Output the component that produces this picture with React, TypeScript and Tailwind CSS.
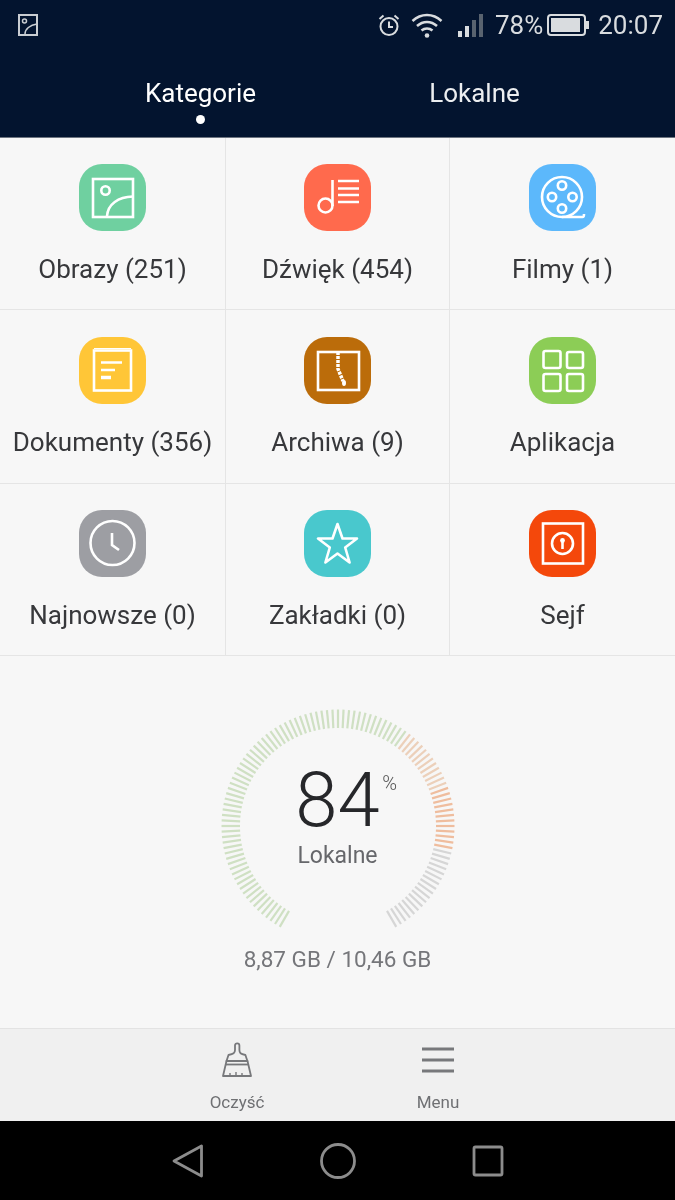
import React from "react";

const S = ({ children }: { children: React.ReactNode }) => (
  <svg viewBox="0 0 67 67" width={67} height={67} fill="none" stroke="#fff" strokeWidth={2.6}>
    {children}
  </svg>
);

const icons: Record<string, React.ReactNode> = {
  image: (
    <S>
      <rect x="14" y="15" width="40" height="38" />
      <circle cx="26.5" cy="26.5" r="4.2" />
      <path d="M28 52c1-12 11-19 26-19.500" />
    </S>
  ),
  music: (
    <S>
      <circle cx="21.500" cy="41.500" r="7" />
      <path d="M28.500 42V16" />
      <path d="M34 17h21M34 24.500h21M34 31h21M34 38h21" />
    </S>
  ),
  film: (
    <S>
      <circle cx="33" cy="33" r="20" />
      <circle cx="33" cy="21.500" r="4.200" />
      <circle cx="23" cy="33" r="4.200" />
      <circle cx="43.500" cy="33" r="4.200" />
      <circle cx="33" cy="44.500" r="4.200" />
      <path d="M33 53h20.500c1.500 0 1.500-1 1.500-3" />
    </S>
  ),
  doc: (
    <S>
      <rect x="15" y="13.500" width="37" height="40" />
      <path d="M15 11.500h37" strokeWidth={1} />
      <path d="M22 25.500h21M22 33h14" />
      <path d="M22 40.500h10" strokeWidth={3.500} />
    </S>
  ),
  zip: (
    <S>
      <rect x="14" y="15" width="41" height="38" />
      <path d="M34 15v17l5 12" strokeWidth={3.500} strokeDasharray="3 1" />
      <ellipse cx="40" cy="46" rx="2" ry="3" fill="#fff" stroke="none" />
    </S>
  ),
  apps: (
    <S>
      <rect x="14.500" y="14" width="17" height="17" rx="2" />
      <rect x="38" y="15" width="16" height="16" rx="2" />
      <rect x="14.500" y="37" width="17" height="17" rx="2" />
      <rect x="38" y="37" width="16" height="17" rx="2" />
    </S>
  ),
  clock: (
    <S>
      <circle cx="33.500" cy="33" r="22" />
      <path d="M33 23v12l7 5" />
    </S>
  ),
  star: (
    <S>
      <path d="M33.500 14l5 14.500h14.500l-11.800 9 4.400 15-12.100-9-12.100 9 4.400-15-11.800-9h14.500z" strokeLinejoin="round" />
    </S>
  ),
  safe: (
    <S>
      <rect x="14" y="13.500" width="40" height="40" />
      <circle cx="33.500" cy="33.500" r="10.500" />
      <circle cx="33.500" cy="30.500" r="2.400" fill="#fff" stroke="none" />
      <path d="M33.500 31v8" />
    </S>
  ),
};

const rows = [
  {
    h: "h-[172px]",
    pt: "pt-[26px]",
    cells: [
      { label: "Obrazy (251)", icon: "image", bg: "bg-[#6fd0a0]" },
      { label: "Dźwięk (454)", icon: "music", bg: "bg-[#ff6a4d]" },
      { label: "Filmy (1)", icon: "film", bg: "bg-[#5cb8fb]" },
    ],
  },
  {
    h: "h-[174px]",
    pt: "pt-[27px]",
    cells: [
      { label: "Dokumenty (356)", icon: "doc", bg: "bg-[#ffc637]" },
      { label: "Archiwa (9)", icon: "zip", bg: "bg-[#bb6c0a]" },
      { label: "Aplikacja", icon: "apps", bg: "bg-[#8ccd56]" },
    ],
  },
  {
    h: "h-[172px]",
    pt: "pt-[26px]",
    cells: [
      { label: "Najnowsze (0)", icon: "clock", bg: "bg-[#9d9ea3]" },
      { label: "Zakładki (0)", icon: "star", bg: "bg-[#49c8cd]" },
      { label: "Sejf", icon: "safe", bg: "bg-[#f4480b]" },
    ],
  },
];

function Gauge() {
  const ticks = [];
  const n = 110;
  for (let i = 0; i <= n; i++) {
    const deg = -150 + (300 * i) / n;
    const a = (deg * Math.PI) / 180;
    const s = Math.sin(a);
    const c = Math.cos(a);
    let color = "#cfe0c3";
    if (deg > 102) color = "#d6d6d6";
    else if (deg > 70) color = "#efbd9e";
    else if (deg > 37) color = "#ecd0ba";
    ticks.push(
      <line key={i} x1={120 + 98 * s} y1={120 - 98 * c} x2={120 + 116.500 * s} y2={120 - 116.500 * c} stroke={color} strokeWidth={2.2} />
    );
  }
  return (
    <svg width={240} height={240} viewBox="0 0 240 240">
      {ticks}
    </svg>
  );
}

export default function App() {
  return (
    <div className="w-[675px] h-[1200px] flex flex-col overflow-hidden bg-[#f7f7f7] blur-[0.7px] font-['Roboto',sans-serif]">
      <header className="h-[138px] shrink-0 bg-[#03142f] border-b border-[#6d7480] text-[#d9dcdf]">
        <div className="h-[50px] flex items-center pl-[18px] pr-3">
          <svg width={20} height={22} viewBox="0 0 20 22" fill="none" stroke="#c9cdd2" strokeWidth={2}>
            <rect x="1" y="1" width="18" height="20" />
            <circle cx="6.500" cy="7" r="2" strokeWidth={1.500} />
            <path d="M7 20c0-5 5-9 12-10" strokeWidth={1.500} />
          </svg>
          <svg className="ml-auto" width={24} height={24} viewBox="0 0 24 24" fill="none" stroke="#d9dcdf" strokeWidth={2}>
            <circle cx="12" cy="13.500" r="8.500" />
            <path d="M12 8.500v5.500h4M2.500 6l4-3.500M21.500 6l-4-3.500" />
          </svg>
          <svg className="ml-[10px]" width={32} height={26} viewBox="0 0 32 26" fill="none" stroke="#d9dcdf" strokeWidth={2.500}>
            <path d="M1.500 9c8.500-8 20.500-8 29 0M6 14c6-5.500 14-5.500 20 0M10.500 18.500c3.200-2.800 7.800-2.800 11 0" />
            <circle cx="16" cy="23.500" r="2.300" fill="#d9dcdf" stroke="none" />
          </svg>
          <svg className="ml-[14px]" width={28} height={24} viewBox="0 0 28 24">
            <rect x="1" y="18" width="4" height="6" fill="#d9dcdf" />
            <rect x="8" y="13" width="4" height="11" fill="#d9dcdf" />
            <rect x="15" y="7" width="4" height="17" fill="#59636f" />
            <rect x="22" y="1" width="4" height="23" fill="#59636f" />
          </svg>
          <span className="ml-[10px] text-[26px] leading-none">78%</span>
          <svg className="ml-[4px]" width={43} height={22} viewBox="0 0 43 22">
            <rect x="1" y="1" width="37" height="20" rx="3" fill="none" stroke="#d9dcdf" strokeWidth={2} />
            <rect x="4" y="4" width="29" height="14" fill="#d9dcdf" />
            <rect x="39" y="7" width="3" height="8" fill="#d9dcdf" />
          </svg>
          <span className="ml-[8px] text-[26px] leading-none">20:07</span>
        </div>
        <div className="flex justify-center pt-[27px]">
          <div className="w-[274px] flex flex-col items-center">
            <span className="text-[26px] leading-[32px] text-white">Kategorie</span>
            <span className="mt-[6px] w-[9px] h-[9px] rounded-full bg-white" />
          </div>
          <div className="w-[274px] flex flex-col items-center">
            <span className="text-[26px] leading-[32px] text-[#eceef0]">Lokalne</span>
          </div>
        </div>
      </header>

      <div className="flex flex-col">
        {rows.map((row, i) => (
          <div key={i} className={`grid grid-cols-[226px_224px_225px] border-b border-[#e5e5e5] ${row.h}`}>
            {row.cells.map((cell, j) => (
              <div key={j} className={`flex flex-col items-center ${row.pt} ${j < 2 ? "border-r border-[#e5e5e5]" : ""}`}>
                <div className={`w-[67px] h-[67px] rounded-[23px] ${cell.bg}`}>{icons[cell.icon]}</div>
                <span className="mt-[20px] text-[26px] leading-[36px] whitespace-nowrap text-[#37383b]">{cell.label}</span>
              </div>
            ))}
          </div>
        ))}
      </div>

      <main className="flex-1 flex flex-col items-center pt-[50px]">
        <div className="relative w-[240px] h-[240px]">
          <Gauge />
          <div className="absolute inset-0 flex flex-col items-center pt-[56px]">
            <div className="relative h-[76px]">
              <span className="block text-[76px] leading-[76px] font-light text-[#26272a]">84</span>
              <span className="absolute left-[87px] top-[11px] text-[20px] leading-none font-light text-[#555]">%</span>
            </div>
            <span className="text-[23px] leading-[28px] mt-[4px] text-[#66676b]">Lokalne</span>
          </div>
        </div>
        <span className="mt-[-1px] text-[22.500px] leading-[28px] text-[#75767a]">8,87 GB / 10,46 GB</span>
      </main>

      <div className="h-[93px] shrink-0 bg-[#f0f0f0] border-t border-[#e3e3e3] flex justify-center gap-[101px]">
        <div className="w-[100px] flex flex-col items-center pt-[13px]">
          <svg width={32} height={36} viewBox="0 0 32 36" fill="none" stroke="#77787b" strokeWidth={1.800} strokeLinejoin="round">
            <path d="M14 8V3.500a2.200 2.200 0 0 1 4.400 0V8c0 3 1 4 6 5l2 6H5.500l2-6c5-1 6.500-2 6.500-5z" />
            <path d="M5.500 19h21l3.500 15H2z" />
            <path d="M5 22.500h22" />
            <path d="M9 34v-3M15 34v-4M21 34v-3" strokeWidth={1.400} />
          </svg>
          <span className="mt-[13px] text-[17px] leading-[22px] text-[#6f7073]">Oczyść</span>
        </div>
        <div className="w-[100px] flex flex-col items-center pt-[13px]">
          <svg width={32} height={36} viewBox="0 0 32 36" fill="none" stroke="#77787b" strokeWidth={3}>
            <path d="M0 7h32M0 18h32M0 29h32" />
          </svg>
          <span className="mt-[13px] text-[17px] leading-[22px] text-[#6f7073]">Menu</span>
        </div>
      </div>

      <nav className="h-[79px] shrink-0 bg-black flex justify-center items-center">
        <div className="w-[150px] flex justify-center">
          <svg width={32} height={34} viewBox="0 0 32 34" fill="none" stroke="#8c8c8c" strokeWidth={2.800} strokeLinejoin="round">
            <path d="M29.500 2v30L2 17z" />
          </svg>
        </div>
        <div className="w-[150px] flex justify-center">
          <svg width={36} height={36} viewBox="0 0 36 36" fill="none" stroke="#8c8c8c" strokeWidth={2.800}>
            <circle cx="18" cy="18" r="16.500" />
          </svg>
        </div>
        <div className="w-[150px] flex justify-center">
          <svg width={32} height={32} viewBox="0 0 32 32" fill="none" stroke="#8c8c8c" strokeWidth={2.800}>
            <rect x="2" y="2" width="28" height="28" rx="1.500" />
          </svg>
        </div>
      </nav>
    </div>
  );
}
